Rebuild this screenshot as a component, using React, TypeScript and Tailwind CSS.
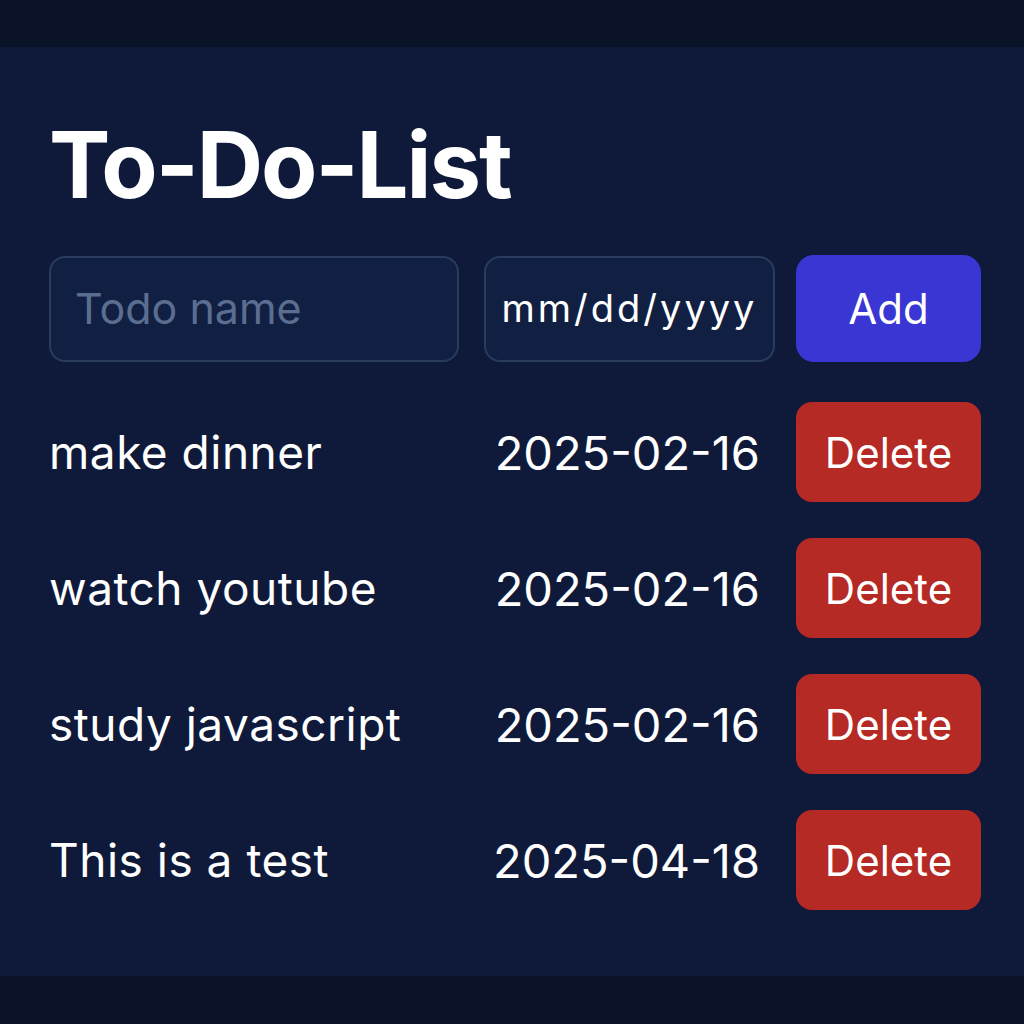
import React from "react";

const todos = [
  { name: "make dinner", date: "2025-02-16" },
  { name: "watch youtube", date: "2025-02-16" },
  { name: "study javascript", date: "2025-02-16" },
  { name: "This is a test", date: "2025-04-18" },
];

export default function App() {
  return (
    <div
      className="w-[1024px] h-[1024px] bg-[#0a1328] flex flex-col"
      style={{ fontFamily: "Inter, 'Noto Sans', sans-serif" }}
    >
      <div className="h-[47px] bg-[#0a1328] shrink-0" />
      <div className="h-[929px] bg-[#0f1a3a] pl-[49px] pr-[43px] pt-[72px] shrink-0">
        <h1 className="text-[92px] leading-none font-bold text-white tracking-[-2px] m-0">
          To-Do-List
        </h1>
        <div className="mt-[44px] flex items-center">
          <div className="w-[410px] h-[106px] rounded-[16px] border-2 border-[#2a3c5e] bg-[#112042] flex items-center pl-[24px] text-[43px] text-[#5b6e91]">
            Todo name
          </div>
          <div className="ml-[25px] w-[291px] h-[106px] rounded-[16px] border-2 border-[#2a3c5e] bg-[#112042] flex items-center justify-center text-[38px] text-white tracking-[3px]">
            mm/dd/yyyy
          </div>
          <div className="ml-[21px] w-[185px] h-[107px] rounded-[18px] bg-[#3936d3] flex items-center justify-center text-[42px] text-white">
            Add
          </div>
        </div>
        <div className="mt-[40px] flex flex-col gap-[36px]">
          {todos.map((t) => (
            <div key={t.name} className="flex items-center">
              <div className="w-[410px] text-[46px] tracking-[0.5px] text-white leading-none">
                {t.name}
              </div>
              <div className="ml-[25px] w-[291px] text-[47px] text-white leading-none text-right pr-[15px]">
                {t.date}
              </div>
              <div className="ml-[21px] w-[185px] h-[100px] rounded-[16px] bg-[#b52a24] flex items-center justify-center text-[42px] text-white">
                Delete
              </div>
            </div>
          ))}
        </div>
      </div>
      <div className="h-[48px] bg-[#0a1328] shrink-0" />
    </div>
  );
}
